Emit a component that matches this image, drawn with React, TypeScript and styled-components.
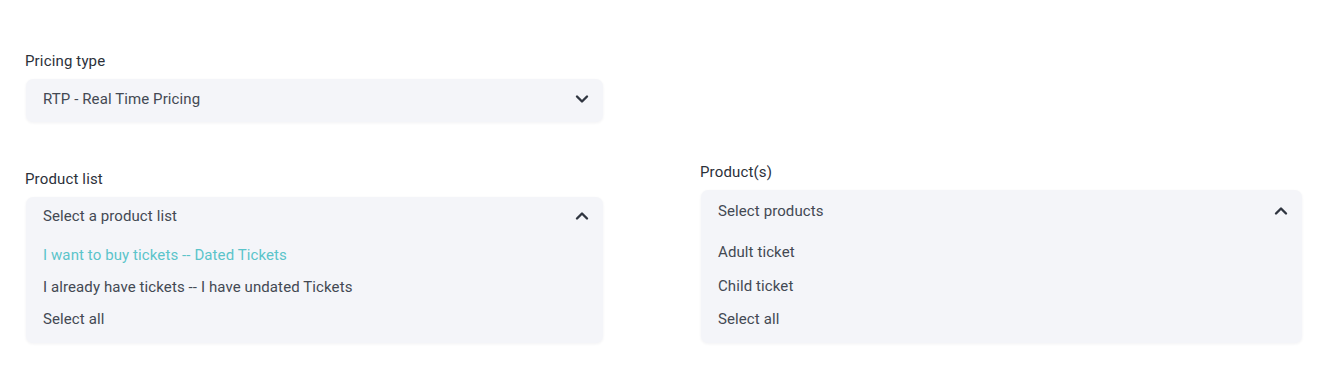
import React from "react";
import styled, { createGlobalStyle } from "styled-components";

const Global = createGlobalStyle`
  html, body { margin: 0; padding: 0; background: #ffffff; }
  body { font-family: Roboto, "Noto Sans", Arial, sans-serif; -webkit-font-smoothing: antialiased; }
`;

const Page = styled.div`
  width: 1338px;
  height: 366px;
  box-sizing: border-box;
  padding: 51px 36px 0 26px;
  display: flex;
  flex-direction: column;
  gap: 40px;
`;

const Row = styled.div`
  display: grid;
  grid-template-columns: 577px 601px;
  column-gap: 98px;
  align-items: end;
`;

const Field = styled.div`
  display: flex;
  flex-direction: column;
`;

const Label = styled.div`
  font-size: 15px;
  letter-spacing: 0.15px;
  line-height: 20px;
  color: #2c313a;
  margin-bottom: 8px;
  margin-left: -1px;
`;

const Box = styled.div<{ $top?: number; $bottom?: number }>`
  background: #f4f5f9;
  border-radius: 7px;
  box-shadow: 0 1px 3px rgba(30, 40, 60, 0.06);
  display: flex;
  flex-direction: column;
  padding: ${(p) => `${p.$top ?? 0}px 0 ${p.$bottom ?? 0}px`};
`;

const Header = styled.div<{ $h: number }>`
  height: ${(p) => p.$h}px;
  display: flex;
  align-items: center;
  justify-content: space-between;
  padding: 0 14px 0 17px;
`;

const Value = styled.span`
  font-size: 15px;
  letter-spacing: 0.1px;
  color: #434953;
`;

const Options = styled.div<{ $gap: number; $top: number }>`
  display: flex;
  flex-direction: column;
  margin-top: ${(p) => p.$top}px;
  padding-left: 17px;
  gap: ${(p) => p.$gap}px;
`;

const Option = styled.div<{ $active?: boolean }>`
  font-size: 15px;
  letter-spacing: 0.1px;
  line-height: 20px;
  color: ${(p) => (p.$active ? "#5bc4ca" : "#434953")};
`;

const Chevron = ({ up }: { up?: boolean }) => (
  <svg width="14" height="10" viewBox="0 0 14 10" style={{ display: "block" }}>
    <polyline
      points={up ? "2,7.5 7,2.5 12,7.5" : "2,2.5 7,7.5 12,2.5"}
      fill="none"
      stroke="#2f3540"
      strokeWidth="2.4"
      strokeLinecap="round"
      strokeLinejoin="round"
    />
  </svg>
);

export default function App() {
  return (
    <>
      <Global />
      <Page>
        <Row>
          <Field>
            <Label>Pricing type</Label>
            <Box $bottom={3}>
              <Header $h={40}>
                <Value>RTP - Real Time Pricing</Value>
                <Chevron />
              </Header>
            </Box>
          </Field>
        </Row>
        <Row>
          <Field>
            <Label>Product list</Label>
            <Box $top={6} $bottom={14}>
              <Header $h={26}>
                <Value>Select a product list</Value>
                <Chevron up />
              </Header>
              <Options $top={16} $gap={12}>
                <Option $active>I want to buy tickets -- Dated Tickets</Option>
                <Option>I already have tickets -- I have undated Tickets</Option>
                <Option>Select all</Option>
              </Options>
            </Box>
          </Field>
          <Field>
            <Label>Product(s)</Label>
            <Box $top={8} $bottom={14}>
              <Header $h={26}>
                <Value>Select products</Value>
                <Chevron up />
              </Header>
              <Options $top={18} $gap={13.5}>
                <Option>Adult ticket</Option>
                <Option>Child ticket</Option>
                <Option>Select all</Option>
              </Options>
            </Box>
          </Field>
        </Row>
      </Page>
    </>
  );
}
